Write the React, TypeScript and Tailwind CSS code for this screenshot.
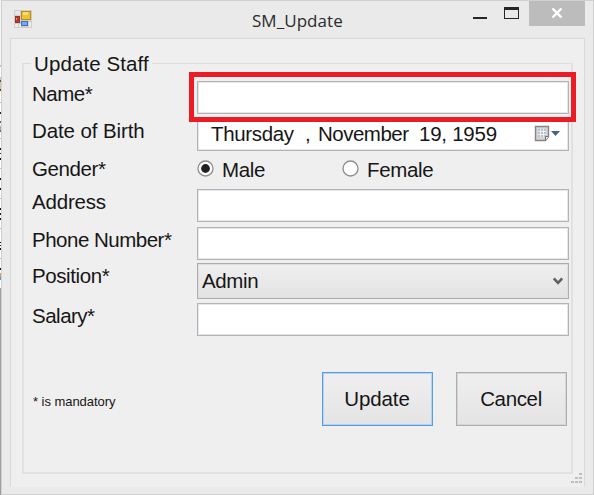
import React from "react";

type TProps = { children: React.ReactNode; className?: string };

function Label({ children, className = "tracking-[-0.5px]" }: TProps) {
  return <div className={`w-[165px] shrink-0 whitespace-pre leading-[22px] ${className}`}>{children}</div>;
}

function Field({ className = "" }: { className?: string }) {
  return <div className={`w-[372px] shrink-0 border border-[#b3b4ba] bg-white shadow-[inset_0_0_0_1px_#e6e6ea] ${className}`} />;
}

function FormIcon() {
  return (
    <svg width="18" height="18" viewBox="0 0 18 18" shapeRendering="crispEdges">
      <rect width="18" height="18" fill="#cdcdcd" />
      <rect x="1" y="1" width="5" height="4" fill="#e6e6e6" />
      <rect x="1" y="14" width="3" height="3" fill="#ededed" />
      <rect x="5" y="14" width="2" height="3" fill="#ededed" />
      <rect x="15" y="12" width="2" height="5" fill="#ededed" />
      <rect x="7" y="1" width="10" height="9" fill="#b08e22" />
      <rect x="8" y="2" width="8" height="7" fill="#f0c030" />
      <rect x="9" y="2" width="5" height="3" fill="#fbdc68" />
      <rect x="1" y="6" width="5" height="7" fill="#96352c" />
      <rect x="2" y="7" width="3" height="5" fill="#bf3529" />
      <rect x="2" y="8" width="1" height="2" fill="#e8887e" />
      <rect x="7" y="11" width="7" height="5" fill="#3f6fbe" />
      <rect x="8" y="12" width="5" height="3" fill="#75a9f2" />
    </svg>
  );
}

function Radio({ checked = false }: { checked?: boolean }) {
  return (
    <svg width="17" height="17" viewBox="0 0 17 17" className="shrink-0">
      <circle cx="8.5" cy="8.5" r="7.5" fill="#fff" stroke="#8e8e8e" strokeWidth="1.3" />
      {checked && <circle cx="8.5" cy="8.5" r="4.4" fill="#222" />}
    </svg>
  );
}

// Sliver of the window behind the dialog: start, height, colour.
const sliver: [number, number, string][] = [
  [0, 65, "#f4f4f4"], [65, 2, "#c4c4c4"], [77, 13, "#dcc3a6"], [80, 2, "#5b5360"], [89, 2, "#4c4238"],
  [102, 1, "#bbbbbb"], [112, 2, "#222222"], [121, 2, "#54607c"], [126, 5, "#c9a47e"], [130, 2, "#5a6a94"],
  [138, 1, "#bbbbbb"], [148, 2, "#111111"], [153, 1, "#222222"], [158, 2, "#111111"], [168, 1, "#bbbbbb"],
  [178, 2, "#111111"], [188, 2, "#111111"], [198, 1, "#bbbbbb"], [208, 2, "#111111"], [213, 2, "#222222"],
  [218, 2, "#111111"], [228, 1, "#bbbbbb"], [242, 1, "#111111"], [245, 1, "#333333"], [248, 2, "#111111"],
  [258, 1, "#bbbbbb"], [268, 2, "#111111"], [273, 4, "#d99a62"], [277, 3, "#5b9bd0"], [288, 207, "#a0a0a0"],
];

export default function App() {
  return (
    <div className="flex h-[495px] w-[594px] overflow-hidden bg-white font-['Liberation_Sans',Arial,sans-serif] text-[20.5px] tracking-[-0.35px] text-[#161616]">
      <svg className="shrink-0" width="1" height="495" shapeRendering="crispEdges">
        {sliver.map(([y, h, fill]) => <rect key={y} y={y} width="1" height={h} fill={fill} />)}
      </svg>
      <div className="flex h-[495px] w-[593px] shrink-0 flex-col border border-[#d0d0d0] bg-[#eaeaea]">
        <div className="flex h-[37px] shrink-0 items-start">
          <div className="ml-3 mt-[9px]"><FormIcon /></div>
          <div className="ml-[220px] mt-[8px] w-[92px] whitespace-nowrap font-['Open_Sans','Noto_Sans',sans-serif] text-[17px] leading-[24px] tracking-[0.05px] text-[#2b2b2b]">SM_Update</div>
          <svg className="ml-[129px] mt-[6px]" width="46" height="13" shapeRendering="crispEdges">
            <rect x="0" y="10" width="14" height="2" fill="#262626" />
            <rect x="31" y="0" width="15" height="12" fill="#262626" />
            <rect x="32" y="3" width="13" height="8" fill="#eaeaea" />
          </svg>
          <div className="ml-[10px] flex h-[25px] w-[56px] justify-center bg-[#bcbcbc] pr-px pt-[7px]">
            <svg width="12" height="10" viewBox="0 0 12 10">
              <path d="M1.5.5 10.5 9.5M10.5.5 1.5 9.5" stroke="#fff" strokeWidth="2.4" />
            </svg>
          </div>
        </div>
        <div className="mx-2 flex h-[449px] shrink-0 flex-col border border-[#d9d9d9] border-b-[#efefef] bg-[#efefef] pl-[11px] pt-[24px]">
          <div className="relative flex h-[411px] w-[551px] shrink-0 flex-col border-2 border-[#e1e1e1] border-t border-t-[#dcdcdc] pl-[8px]">
            <div className="absolute left-[7px] top-[-12px] bg-[#efefef] pl-[3px] pr-[3px] leading-[24px] tracking-[0.1px]">Update Staff</div>
            <div className="flex h-[37px] items-start pt-[17px]">
              <Label className="mt-[2px] tracking-[-0.5px]">Name*</Label>
              <Field className="h-[33px] shrink-0" />
            </div>
            <div className="flex h-[52px] items-start pt-[17px]">
              <Label className="mt-[2px] tracking-[-0.1px]">Date of Birth</Label>
              <div className="flex h-[33px] w-[372px] shrink-0 items-center border border-[#b3b4ba] bg-white pb-[2px] pl-[13px] shadow-[inset_0_0_0_1px_#e6e6ea]">
                <div className="flex w-[323px] whitespace-pre leading-[22px]">
                  <span className="w-[94px]">Thursday</span>
                  <span className="w-[13px]">,</span>
                  <span className="w-[101px] tracking-[-0.5px]">November</span>
                  <span className="tracking-[-0.25px]">19, 1959</span>
                </div>
                <svg width="27" height="18" viewBox="0 0 27 18">
                  <path d="M1.5 1.5h13v10l-3 4h-10z" fill="#d6d4d4" stroke="#8a8482" strokeWidth="1.4" />
                  <path d="M4 4h8v8H4z" fill="#b9c2d2" />
                  <path d="M4 6.5h8M4 9.5h8M6.5 4v8M9.5 4v8" stroke="#fff" strokeWidth=".7" />
                  <path d="M11.5 15.5v-4h3" fill="#eee" stroke="#75706e" />
                  <path d="M17 6h9l-4.5 5z" fill="#47618f" />
                </svg>
              </div>
            </div>
            <div className="flex h-[36px] items-start">
              <Label className="mt-[5px] tracking-[-0.4px]">Gender*</Label>
              <div className="mt-[7px]"><Radio checked /></div>
              <span className="ml-[8px] mt-[6px] w-[120px] leading-[22px]">Male</span>
              <div className="mt-[7px]"><Radio /></div>
              <span className="ml-[8px] mt-[6px] leading-[22px]">Female</span>
            </div>
            <div className="flex h-[38px] items-start">
              <Label className="mt-[2px] tracking-[-0.2px]">Address</Label>
              <Field className="h-[33px]" />
            </div>
            <div className="flex h-[36px] items-start">
              <Label className="mt-[2px] tracking-[-0.5px]">Phone Number*</Label>
              <Field className="h-[33px]" />
            </div>
            <div className="flex h-[40px] items-start">
              <Label className="mt-[2px] tracking-[-0.4px]">Position*</Label>
              <div className="flex h-[36px] w-[372px] shrink-0 items-center justify-between border border-[#adadad] bg-gradient-to-b from-[#efefef] to-[#e3e3e3] pl-1 pr-[5px] shadow-[inset_0_0_0_1px_#dedede]">
                <span>Admin</span>
                <svg width="10" height="8" viewBox="0 0 10 8"><path d="M.8 1.5 5 5.8 9.2 1.5" fill="none" stroke="#606060" strokeWidth="2.6" /></svg>
              </div>
            </div>
            <div className="flex h-[69px] items-start">
              <Label className="mt-[2px] tracking-[-0.5px]">Salary*</Label>
              <Field className="h-[33px]" />
            </div>
            <div className="flex items-start">
              <span className="ml-[1px] mt-[21px] w-[289px] text-[13px] leading-[18px] tracking-[-0.05px]">* is mandatory</span>
              <button className="h-[54px] w-[111px] border border-[#569de5] bg-gradient-to-b from-[#efefef] to-[#e4e4e4] pr-px tracking-[-0.1px] shadow-[inset_0_0_0_1px_#b4d3f2]">Update</button>
              <button className="ml-[23px] h-[54px] w-[111px] border border-[#adadad] bg-gradient-to-b from-[#efefef] to-[#e4e4e4] pr-px shadow-[inset_0_0_0_1px_#d6d6d6]">Cancel</button>
            </div>
            <div className="absolute left-[165px] top-[8px] h-[50px] w-[387px] border-[5px] border-[#ed1c24]" />
          </div>
          <svg className="-mt-[2px] ml-[549px]" width="12" height="12" shapeRendering="crispEdges" fill="#bebebe">
            <path d="M8 1h3v2H8zM4 5h3v2H4zM8 5h3v2H8zM0 9h3v2H0zM4 9h3v2H4zM8 9h3v2H8z" />
          </svg>
        </div>
      </div>
    </div>
  );
}
